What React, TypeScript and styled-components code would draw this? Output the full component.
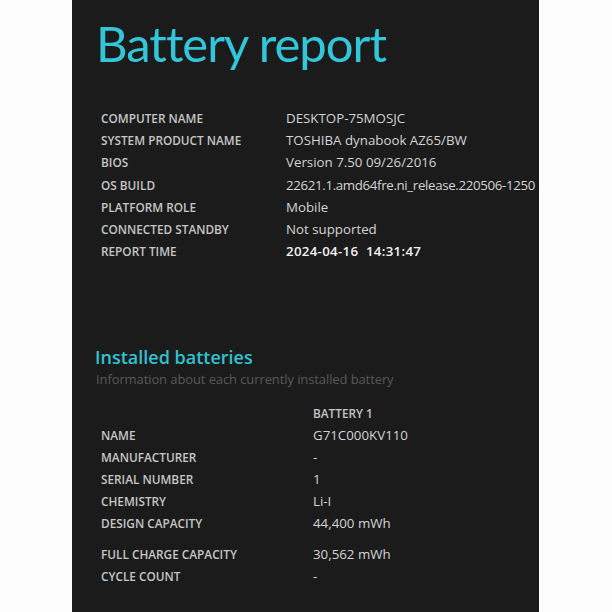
import React from "react";
import styled, { createGlobalStyle } from "styled-components";

const Global = createGlobalStyle`
  html, body { margin: 0; padding: 0; background: #fdfdfd; }
  body { font-family: "Open Sans", "Noto Sans", sans-serif; }
`;

const Panel = styled.main`
  margin-left: 72px;
  width: 467px;
  height: 612px;
  overflow: hidden;
  background: #1b1b1b;
  box-sizing: border-box;
  padding: 13px 0 0 24px;
`;

const Title = styled.h1`
  margin: 0;
  font-family: "Lato", "Open Sans", sans-serif;
  font-weight: 400;
  font-size: 49px;
  line-height: 60px;
  letter-spacing: -1px;
  color: #31c6d9;
`;

const InfoTable = styled.div`
  display: grid;
  grid-template-columns: 185px 1fr;
  margin-top: 34px;
  padding-left: 5px;
`;

const Label = styled.div<{ $gap?: number }>`
  font-size: 11.8px;
  font-weight: 600;
  line-height: 22.2px;
  color: #c6c6c6;
  white-space: nowrap;
  margin-top: ${(p) => p.$gap ?? 0}px;
`;

const Value = styled.div<{ $strong?: boolean; $tight?: boolean; $gap?: number }>`
  font-size: 13.3px;
  line-height: 22.2px;
  color: ${(p) => (p.$strong ? "#f2f2f2" : "#d4d4d4")};
  font-weight: ${(p) => (p.$strong ? 600 : 400)};
  letter-spacing: ${(p) => (p.$tight ? "-0.35px" : p.$strong ? "0.3px" : "0")};
  white-space: nowrap;
  margin-top: ${(p) => p.$gap ?? 0}px;
`;

const Section = styled.section`
  margin-top: 84px;
`;

const SectionTitle = styled.h2`
  margin: 0;
  font-size: 18px;
  font-weight: 600;
  line-height: 22px;
  color: #2fc2d3;
  margin-left: -1px;
`;

const SectionSub = styled.p`
  margin: 0;
  font-size: 13px;
  line-height: 22px;
  color: #595959;
  letter-spacing: -0.1px;
`;

const BatteryTable = styled(InfoTable)`
  grid-template-columns: 212px 1fr;
  margin-top: 12px;
`;

const HeadLabel = styled(Label)`
  margin-bottom: -1px;
`;

const info: [string, string, ("strong" | "tight")?][] = [
  ["COMPUTER NAME", "DESKTOP-75MOSJC"],
  ["SYSTEM PRODUCT NAME", "TOSHIBA dynabook AZ65/BW"],
  ["BIOS", "Version 7.50 09/26/2016"],
  ["OS BUILD", "22621.1.amd64fre.ni_release.220506-1250", "tight"],
  ["PLATFORM ROLE", "Mobile"],
  ["CONNECTED STANDBY", "Not supported"],
  ["REPORT TIME", "2024-04-16\u00a0\u00a014:31:47", "strong"],
];

const battery: [string, string, number?][] = [
  ["NAME", "G71C000KV110"],
  ["MANUFACTURER", "-"],
  ["SERIAL NUMBER", "1"],
  ["CHEMISTRY", "Li-I"],
  ["DESIGN CAPACITY", "44,400 mWh"],
  ["FULL CHARGE CAPACITY", "30,562 mWh", 8],
  ["CYCLE COUNT", "-"],
];

export default function App() {
  return (
    <>
      <Global />
      <Panel>
        <Title>Battery report</Title>
        <InfoTable>
          {info.map(([k, v, s]) => (
            <React.Fragment key={k}>
              <Label>{k}</Label>
              <Value $strong={s === "strong"} $tight={s === "tight"}>
                {v}
              </Value>
            </React.Fragment>
          ))}
        </InfoTable>
        <Section>
          <SectionTitle>Installed batteries</SectionTitle>
          <SectionSub>Information about each currently installed battery</SectionSub>
          <BatteryTable>
            <HeadLabel />
            <HeadLabel>BATTERY 1</HeadLabel>
            {battery.map(([k, v, g]) => (
              <React.Fragment key={k}>
                <Label $gap={g}>{k}</Label>
                <Value $gap={g}>{v}</Value>
              </React.Fragment>
            ))}
          </BatteryTable>
        </Section>
      </Panel>
    </>
  );
}
